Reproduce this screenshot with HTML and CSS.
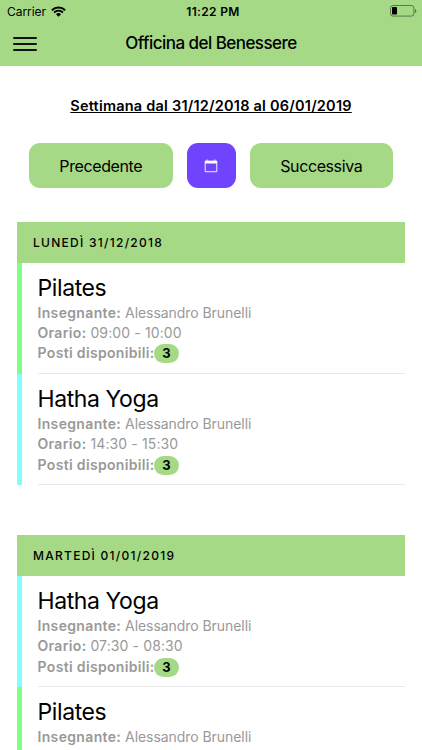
FILE: index.html
```html
<!DOCTYPE html>
<html lang="it">
  <head>
    <meta charset="UTF-8" />
    <meta name="viewport" content="width=device-width, initial-scale=1.0" />
    <title>Officina del Benessere</title>

    <link rel="stylesheet" href="styles.css">
  </head>
  <body>
    <header class="header">
      <div class="status-bar">
        <div class="carrier">
          <span>Carrier</span>
          <svg class="wifi" viewBox="0 0 15 11">
            <path d="M0.9 4.2a9.4 9.4 0 0 1 13.2 0M3.1 6.5a6.2 6.2 0 0 1 8.8 0" fill="none" stroke="#000" stroke-width="1.9" />
            <path d="M7.5 10.8L5 8.3a3.6 3.6 0 0 1 5 0z" />
          </svg>
        </div>
        <span class="time">11:22 PM</span>
        <svg class="battery" viewBox="0 0 27 12">
          <rect x="0.5" y="0.5" width="23.4" height="10.6" rx="2.6" fill="none" stroke="#000" stroke-opacity="0.45" />
          <rect x="2" y="2" width="5" height="7.6" rx="0.8" />
          <path d="M25 4v4c1.8-.6 1.8-3.4 0-4z" fill-opacity="0.45" />
        </svg>
      </div>
      <div class="toolbar">
        <button class="menu-btn" aria-label="Menu">
          <span></span>
          <span></span>
          <span></span>
        </button>
        <h1 class="title">Officina del Benessere</h1>
      </div>
    </header>

    <main>
      <p class="week"><span>Settimana dal 31/12/2018 al 06/01/2019</span></p>

      <div class="buttons">
        <button class="btn">Precedente</button>
        <button class="btn btn-calendar" aria-label="Calendario">
          <svg viewBox="0 0 14 14">
            <path d="M1.2 2.1h11.6v10.6H1.2z" fill="none" stroke="#fff" stroke-width="0.9" />
            <path d="M1 1.9h12v2.7H1zM2.7 0.6h0.9v2h-0.9zM10.4 0.6h0.9v2h-0.9z" fill="#fff" />
          </svg>
        </button>
        <button class="btn">Successiva</button>
      </div>

      <section class="day">
        <h2 class="day-title">Lunedì 31/12/2018</h2>
        <div class="lesson green">
          <div class="lesson-info">
            <h3>Pilates</h3>
            <p><b>Insegnante:</b> <span class="name">Alessandro Brunelli</span></p>
            <p><b>Orario:</b> <span class="range">09:00 - 10:00</span></p>
            <p><b>Posti disponibili:</b><span class="badge">3</span></p>
          </div>
        </div>
        <div class="lesson cyan">
          <div class="lesson-info">
            <h3>Hatha Yoga</h3>
            <p><b>Insegnante:</b> <span class="name">Alessandro Brunelli</span></p>
            <p><b>Orario:</b> <span class="range">14:30 - 15:30</span></p>
            <p><b>Posti disponibili:</b><span class="badge">3</span></p>
          </div>
        </div>
      </section>

      <section class="day">
        <h2 class="day-title">Martedì 01/01/2019</h2>
        <div class="lesson cyan">
          <div class="lesson-info">
            <h3>Hatha Yoga</h3>
            <p><b>Insegnante:</b> <span class="name">Alessandro Brunelli</span></p>
            <p><b>Orario:</b> <span class="range">07:30 - 08:30</span></p>
            <p><b>Posti disponibili:</b><span class="badge">3</span></p>
          </div>
        </div>
        <div class="lesson green last">
          <div class="lesson-info">
            <h3>Pilates</h3>
            <p><b>Insegnante:</b> <span class="name">Alessandro Brunelli</span></p>
          </div>
        </div>
      </section>
    </main>
  </body>
</html>
```

FILE: styles.css
```css
* {
  margin: 0;
  padding: 0;
  box-sizing: border-box;
}

body {
  height: 750px;
  overflow: hidden;
  background-color: #fff;
  color: #000;
  font-family: Inter, "Liberation Sans", sans-serif;
}

button {
  border: none;
  font-family: inherit;
  color: #000;
  cursor: pointer;
}

/* header */
.header {
  height: 65.6px;
  background-color: #a5d986;
}

.status-bar {
  height: 22px;
  padding: 0 5px 0 7px;
  display: grid;
  grid-template-columns: 1fr auto 1fr;
  align-items: center;
  font-size: 12px;
}

.carrier {
  display: flex;
  align-items: center;
  gap: 5px;
  letter-spacing: -0.05px;
}

.wifi {
  width: 15px;
  height: 11px;
}

.time {
  padding-left: 2px;
  font-weight: 600;
  font-size: 12px;
  letter-spacing: 0.35px;
}

.battery {
  width: 27px;
  height: 12px;
  justify-self: end;
}

.toolbar {
  height: 43px;
  padding: 0 13px;
  display: grid;
  grid-template-columns: 1fr auto 1fr;
  align-items: center;
}

.menu-btn {
  width: 24px;
  height: 14px;
  background: none;
  display: flex;
  flex-direction: column;
  justify-content: space-between;
}

.menu-btn span {
  width: 24px;
  height: 2px;
  border-radius: 1px;
  background-color: #111;
}

.title {
  margin-top: -1px;
  font-size: 17px;
  font-weight: 500;
  letter-spacing: -0.54px;
}

/* week */
.week {
  padding-top: 30.4px;
  text-align: center;
  font-size: 14.5px;
  line-height: 20px;
  font-weight: 600;
  letter-spacing: 0.22px;
  text-decoration: underline;
}

.buttons {
  display: flex;
  gap: 14px;
  padding: 27px 29px 0;
}

.btn {
  flex: 1;
  height: 45px;
  padding-top: 1px;
  border-radius: 11px;
  background-color: #a5d986;
  font-size: 16px;
  line-height: 22px;
  font-weight: 400;
  letter-spacing: -0.4px;
}

.btn-calendar {
  flex: none;
  width: 49px;
  background-color: #7044ff;
  display: flex;
  align-items: center;
  justify-content: center;
}

.btn-calendar svg {
  width: 14px;
  height: 14px;
}

/* lessons */
.day {
  margin: 34px 17px 0 16.5px;
}

.day + .day {
  margin-top: 50px;
}

.day-title {
  height: 40.7px;
  padding-left: 16.5px;
  background-color: #a5d986;
  font-size: 12px;
  line-height: 41px;
  font-weight: 500;
  letter-spacing: 1.27px;
  text-transform: uppercase;
}

.lesson {
  height: 111.3px;
  padding-left: 16px;
  border-left: 5.5px solid;
}

.lesson.last {
  height: 63px;
}

.green {
  border-color: #80ff80;
}

.cyan {
  border-color: #80ffff;
}

.lesson-info {
  height: 100%;
  padding-top: 10px;
  border-bottom: 1px solid #e8e8e8;
}

.last .lesson-info {
  border-bottom: none;
}

.lesson h3 {
  font-size: 23px;
  line-height: 30px;
  font-weight: 400;
  letter-spacing: -0.4px;
}

.lesson p {
  font-size: 14px;
  line-height: 20.4px;
  color: #999;
}

.lesson b {
  font-weight: 600;
  letter-spacing: 0.34px;
}

.name {
  letter-spacing: -0.06px;
}

.range {
  letter-spacing: 0.12px;
}

.badge {
  display: inline-block;
  width: 25px;
  height: 19px;
  margin-left: -0.7px;
  border-radius: 10px;
  background-color: #a5d986;
  color: #000;
  text-align: center;
  font-size: 13px;
  line-height: 19px;
  font-weight: 700;
}
```
